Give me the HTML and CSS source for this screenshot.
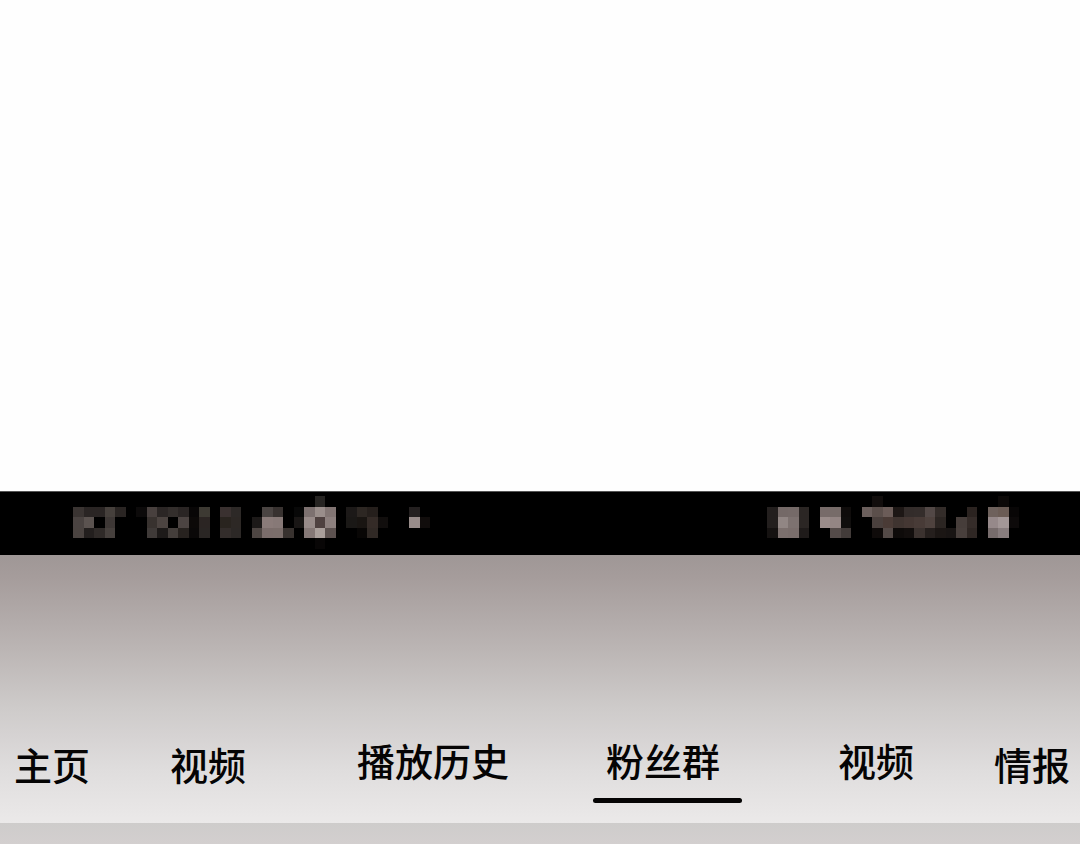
FILE: index.html
```html
<!DOCTYPE html>
<html lang="zh-CN">
<head>
<meta charset="utf-8">
<meta name="viewport" content="width=device-width, initial-scale=1">
<title>粉丝群</title>
<link rel="stylesheet" href="styles.css">
</head>
<body>
<div class="blank"></div>
<header class="status">
  <svg class="mosaic mosaic-left" viewBox="0 0 34 5" data-mosaic="left" aria-hidden="true"></svg>
  <svg class="mosaic mosaic-right" viewBox="0 0 24 5" data-mosaic="right" aria-hidden="true"></svg>
</header>
<main class="panel">
  <nav class="tabs">
    <a class="tab tab-low" href="#home">主页</a>
    <a class="tab tab-low" href="#video">视频</a>
    <a class="tab" href="#history">播放历史</a>
    <a class="tab tab-active" href="#fans" aria-current="page">粉丝群</a>
    <a class="tab" href="#clips">视频</a>
    <a class="tab tab-low" href="#info">情报</a>
  </nav>
</main>
<footer class="below"></footer>
<script src="mosaic.js"></script>
</body>
</html>
```
FILE: styles.css
```css
* {
  box-sizing: border-box;
}

body {
  margin: 0;
  min-height: 100vh;
  display: flex;
  flex-direction: column;
  background: #fefefe;
  color: #050404;
  font-family: "Noto Sans CJK SC", sans-serif;
}

.blank {
  flex: 1;
}

.status {
  display: flex;
  justify-content: space-between;
  padding: 4px 61px 6px 73px;
  background: #000;
  border-top: 1px solid #555;
}

.mosaic {
  display: block;
  height: 53px;
}

.mosaic-left {
  width: 357px;
}

.mosaic-right {
  width: 252px;
}

.panel {
  padding-top: 177px;
  padding-bottom: 20px;
  background: linear-gradient(#9f9796 0%, #a59c9b 8%, #bbb5b4 35%, #cecbca 57%, #d6d3d3 68%, #dfdddd 80%, #ebe9e9 100%);
}

.tabs {
  display: grid;
  grid-template-columns: 156fr 187fr 236fr 245fr 156fr 86fr;
  align-items: start;
  padding-left: 14px;
}

.tab {
  color: inherit;
  font-size: 38px;
  font-weight: 500;
  line-height: 56px;
  text-decoration: none;
  white-space: nowrap;
}

.tab-low {
  padding-top: 4px;
}

.tab-active {
  display: grid;
  row-gap: 10px;
  justify-self: start;
  padding-left: 13px;
  padding-right: 22px;
}

.tab-active::after {
  content: "";
  height: 5px;
  margin-left: -13px;
  margin-right: -22px;
  border-radius: 3px;
  background: #050404;
}

.below {
  height: 21px;
  background: linear-gradient(#cecccb, #d3cfcf);
}
```
FILE: mosaic.js
```javascript
// Each row is [row, first column, colours...]; null leaves a cell empty.
const mosaics = {
  left: [
    [0, 23, "#262422"],
    [1, 0, "#3a3432", "#2a2524", "#2a2524", "#46403c", "#2a2523", null, "#0c0a0a", "#48403e", "#2b2625", "#332e2c", "#2a2524", "#080606", "#3d3a33", null, "#3a3130", "#2d2927", null, null, "#4a4442", "#383230", null, "#080808", "#7d7170", "#9a8e8b", "#827573", null, "#1c1918", "#2d2723", "#251f1c", null, null, null, "#242020"],
    [2, 0, "#4a4341", "#5b5350", null, "#3d3735", null, null, null, "#38322f", "#4c4441", null, "#4c4442", "#0c0908", "#2b2523", null, "#29241f", "#2d2825", null, "#1c1918", "#8a7b79", "#877977", null, "#191615", "#988b89", "#4f4140", "#8d807e", null, "#1a1816", "#191512", "#342b27", "#110e0d", null, null, "#988c8a", "#110d0c"],
    [3, 0, "#4a4340", "#231f1e", "#2f2a28", "#46403d", null, null, null, "#3f3a38", "#1d1a19", "#443e3b", "#27221f", "#0a0808", "#2a2624", null, "#332d2b", "#2c2826", null, "#4d4542", "#7b6d6b", "#7b6e6b", "#38322f", null, "#857876", "#aa9f9b", "#5d5250", null, null, "#080605", "#302925"],
    [4, 23, "#080606"]
  ],
  right: [
    [0, 10, "#110d0c"],
    [0, 22, "#0c0908"],
    [1, 0, "#231f1e", "#746967", "#756a68", "#2b2624", null, "#776b69", "#776c69", "#0f0c0b", null, "#6b5f5c", "#5b4f4b", "#6b5c58", "#1d1715", "#332c2a", "#342d2b", "#524846", "#332c29", null, null, "#2b2320", null, "#6e615c", "#6b5c55", "#080606"],
    [2, 0, "#231f1e", "#918684", "#7d7270", "#2b2624", null, "#9a8c8a", "#948684", "#100e0d", null, null, "#4a403d", "#4a3b36", "#3f3430", "#443733", "#483b37", "#4e423e", "#2b2522", null, "#463d3a", "#352c29", null, "#96898a", "#a39797", "#0d0a0a"],
    [3, 0, "#151211", "#7c706e", "#7a6e6c", "#1f1b1a", null, null, "#544b49", "#423b39", null, null, "#0f0b0a", "#544a47", "#0e0b0a", "#120e0d", "#3b322f", "#251f1d", "#1b1614", "#181413", "#483f3c", "#2f2724", null, "#776c6c", "#887d7e"]
  ]
};

for (const svg of document.querySelectorAll("[data-mosaic]")) {
  for (const [row, start, ...colours] of mosaics[svg.dataset.mosaic]) {
    colours.forEach((colour, i) => {
      if (!colour) return;
      const cell = document.createElementNS("http://www.w3.org/2000/svg", "rect");
      cell.setAttribute("x", start + i);
      cell.setAttribute("y", row);
      cell.setAttribute("width", 1);
      cell.setAttribute("height", 1);
      cell.setAttribute("fill", colour);
      cell.setAttribute("shape-rendering", "crispEdges");
      svg.append(cell);
    });
  }
}
```
